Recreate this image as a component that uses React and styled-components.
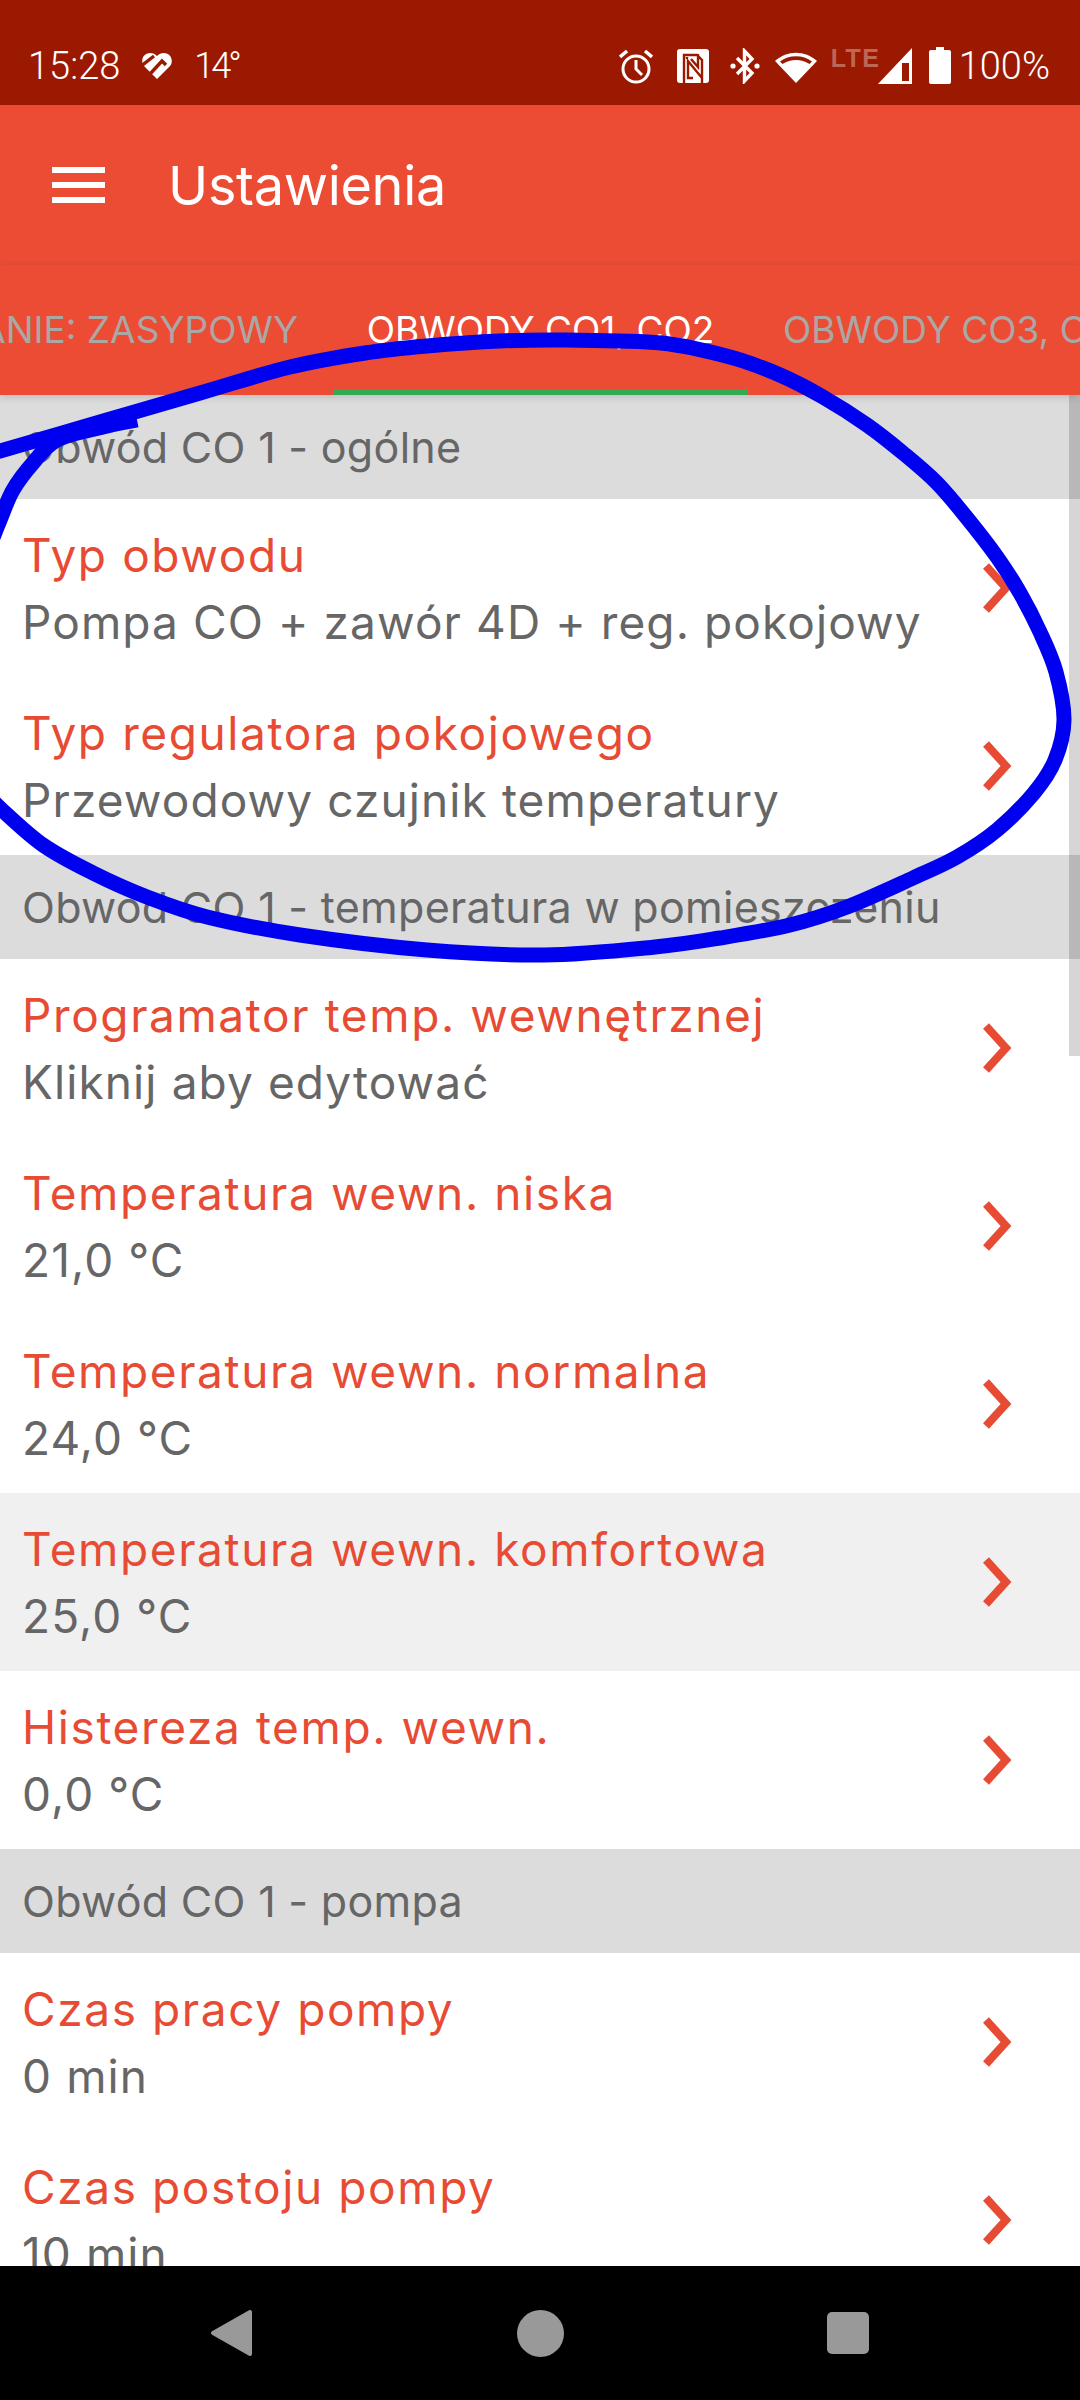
import React from 'react'
import styled, { createGlobalStyle } from 'styled-components'

const Global = createGlobalStyle`
  html, body { margin: 0; padding: 0; background: #fff; }
  * { box-sizing: border-box; }
`

const Screen = styled.div`
  position: relative;
  width: 1080px;
  height: 2400px;
  display: flex;
  flex-direction: column;
  overflow: hidden;
  font-family: Inter, "Liberation Sans", sans-serif;
  background: #fff;
`

const StatusBar = styled.div`
  height: 105px;
  flex: none;
  background: #9b1900;
  color: #fff;
  display: flex;
  align-items: center;
  justify-content: space-between;
  padding: 26px 30px 0 28px;
  font-family: Roboto, sans-serif;
  font-weight: 300;
`

const StatusGroup = styled.div`
  display: flex;
  align-items: center;
  gap: ${p => p.$gap || 0}px;
`

const Slot = styled.div`
  display: flex;
  margin-left: ${p => p.$left || 0}px;
`

const StatusText = styled.span`
  font-size: ${p => p.$size || 38}px;
  line-height: 40px;
  letter-spacing: ${p => p.$spacing || 0}px;
`

const AppBar = styled.div`
  height: 160px;
  flex: none;
  background: #ec4c34;
  color: #fff;
  display: flex;
  align-items: center;
  gap: 63px;
  padding: 0 0 0 52px;
`

const MenuIcon = styled.div`
  width: 53px;
  display: flex;
  flex-direction: column;
  gap: 9px;
  span {
    height: 6px;
    background: #fff;
  }
`

const Title = styled.div`
  font-size: 54px;
  font-weight: 400;
  letter-spacing: -0.3px;
`

const Tabs = styled.div`
  height: 130px;
  flex: none;
  background: #ec4c34;
  display: grid;
  grid-template-columns: 333px 415px 332px;
  overflow: hidden;
  position: relative;
  z-index: 1;
  box-shadow: 0 2px 8px rgba(0, 0, 0, 0.15);
`

const Tab = styled.div`
  display: flex;
  justify-content: ${p => p.$align};
  padding: 43px 35px 0;
  white-space: nowrap;
  overflow: hidden;
  font-size: 37px;
  line-height: 44px;
  color: ${p => (p.$active ? '#fff' : '#aaa7a5')};
  border-bottom: 6px solid ${p => (p.$active ? '#34a853' : 'transparent')};
`

const List = styled.div`
  flex: 1;
  min-height: 0;
  overflow: hidden;
`

const Section = styled.div`
  height: 104px;
  background: #dcdcdc;
  color: #666;
  display: flex;
  align-items: center;
  padding-left: 22px;
  font-size: 43px;
  letter-spacing: 0.3px;
`

const Row = styled.div`
  height: 178px;
  background: ${p => (p.$hover ? '#f0f0f0' : '#fff')};
  display: flex;
  align-items: center;
  justify-content: space-between;
  padding: 0 66px 0 22px;
`

const RowText = styled.div`
  display: flex;
  flex-direction: column;
  gap: 15px;
  white-space: nowrap;
`

const RowTitle = styled.div`
  color: #e84b34;
  font-size: 46px;
  line-height: 52px;
  letter-spacing: 1.6px;
`

const RowValue = styled.div`
  color: #666;
  font-size: 46px;
  line-height: 52px;
  letter-spacing: 1.1px;
`

const ScrollThumb = styled.div`
  position: absolute;
  top: 395px;
  right: 0;
  width: 11px;
  height: 661px;
  background: rgba(0, 0, 0, 0.16);
`

const Doodle = styled.svg`
  position: absolute;
  inset: 0;
  z-index: 2;
  pointer-events: none;
`

const NavBar = styled.div`
  position: absolute;
  left: 0;
  right: 0;
  bottom: 0;
  z-index: 3;
  height: 134px;
  background: #000;
  display: grid;
  grid-template-columns: repeat(3, 308px);
  justify-content: center;
  justify-items: center;
  align-items: center;
`

const NavCircle = styled.div`
  width: 47px;
  height: 47px;
  border-radius: 50%;
  background: #999;
`

const NavSquare = styled.div`
  width: 42px;
  height: 42px;
  border-radius: 5px;
  background: #999;
`

const LteText = styled.span`
  width: 40px;
  height: 36px;
  font-family: "Liberation Sans", sans-serif;
  font-weight: 700;
  font-size: 25px;
  line-height: 20px;
  letter-spacing: 1.5px;
  color: rgba(255, 255, 255, 0.35);
`

const Chevron = () => (
  <svg width="32" height="50" viewBox="0 0 32 50">
    <path d="M4 3 L24 25 L4 47" fill="none" stroke="#e84b34" strokeWidth="8" />
  </svg>
)

const AlarmIcon = () => (
  <svg width="34" height="36" viewBox="0 0 34 36" fill="none" stroke="#fff" strokeWidth="3">
    <circle cx="17" cy="21" r="13" />
    <path d="M17 12 V21 L23 27" />
    <path d="M1 9 L8 3 M33 9 L26 3" strokeWidth="3.5" />
  </svg>
)

const NfcIcon = () => (
  <svg width="32" height="34" viewBox="0 0 32 34">
    <rect x="0" y="0" width="32" height="34" rx="3" fill="#fff" />
    <path d="M7 34 V6 H20 L25 11 V34 M10 10 V8 M25 29 L11 12 V29 H16 M14 10 L21 18 V5" fill="none" stroke="#9b1900" strokeWidth="2.4" />
  </svg>
)

const BluetoothIcon = () => (
  <svg width="30" height="36" viewBox="0 0 30 36" fill="#fff">
    <path d="M7 10 L22 25 L14.5 33 V3 L22 11 L7 26" fill="none" stroke="#fff" strokeWidth="3.4" />
    <circle cx="3" cy="18" r="2.6" />
    <circle cx="27" cy="18" r="2.6" />
  </svg>
)

const WifiIcon = () => (
  <svg width="42" height="36" viewBox="0 0 42 36">
    <path d="M21 35 L0 13 C12 2 30 2 42 13 Z" fill="#fff" />
    <path d="M5 13.5 C14 6.5 28 6.5 37 13.5 L34.5 16 C26 10.5 16 10.5 7.5 16 Z" fill="#9b1900" />
  </svg>
)

const SignalIcon = () => (
  <svg width="34" height="36" viewBox="0 0 34 36">
    <path d="M34 0 V36 H0 Z" fill="#fff" />
    <path d="M24 15 H31 V33 H24 Z" fill="#9b1900" />
  </svg>
)

const BatteryIcon = () => (
  <svg width="22" height="37" viewBox="0 0 22 37">
    <path d="M7 0 H15 V3 H20 Q22 3 22 5 V35 Q22 37 20 37 H2 Q0 37 0 35 V5 Q0 3 2 3 H7 Z" fill="#fff" />
  </svg>
)

const HeartIcon = () => (
  <svg width="30" height="26" viewBox="0 0 30 26">
    <path d="M15 26 L2 13 C-2 8 1 0 8 0 C11 0 13 1 15 3 C17 1 19 0 22 0 C29 0 32 8 28 13 Z" fill="#fff" />
    <path d="M-2 14 L12 3 M8 21 L20 8 L24 12" fill="none" stroke="#9b1900" strokeWidth="3.4" />
  </svg>
)

const BackIcon = () => (
  <svg width="44" height="48" viewBox="0 0 44 48">
    <path d="M40 3 V45 L3 24 Z" fill="#999" stroke="#999" strokeWidth="4" strokeLinejoin="round" />
  </svg>
)

// hand drawn circle around the first group, traced from the screenshot
const strokeA = [
  [-12, 455], [0, 451], [100, 422], [200, 393], [290, 367], [365, 353], [427, 346], [500, 341],
  [565, 340], [661, 343], [730, 357], [780, 375], [823, 397], [867, 425], [903, 453], [937, 483],
  [967, 518], [997, 557], [1020, 593], [1040, 632], [1056, 672], [1064, 720], [1055, 760], [1034, 793],
  [997, 830], [957, 857], [913, 878], [847, 907], [790, 925], [720, 938], [655, 947], [544, 955], [427, 950], [300, 935],
  [207, 917], [147, 897], [93, 873], [43, 845], [0, 808], [-12, 795],
]
const strokeB = [[-8, 540], [0, 520], [13, 490], [33, 463], [57, 440], [103, 427], [137, 420]]

const smooth = pts => {
  let d = `M${pts[0][0]} ${pts[0][1]}`
  for (let i = 0; i < pts.length - 1; i++) {
    const p0 = pts[i - 1] || pts[i]
    const p1 = pts[i]
    const p2 = pts[i + 1]
    const p3 = pts[i + 2] || p2
    const c1x = p1[0] + (p2[0] - p0[0]) / 6
    const c1y = p1[1] + (p2[1] - p0[1]) / 6
    const c2x = p2[0] - (p3[0] - p1[0]) / 6
    const c2y = p2[1] - (p3[1] - p1[1]) / 6
    d += ` C${c1x} ${c1y} ${c2x} ${c2y} ${p2[0]} ${p2[1]}`
  }
  return d
}

const groups = [
  {
    name: 'Obwód CO 1 - ogólne',
    rows: [
      { title: 'Typ obwodu', value: 'Pompa CO + zawór 4D + reg. pokojowy' },
      { title: 'Typ regulatora pokojowego', value: 'Przewodowy czujnik temperatury' },
    ],
  },
  {
    name: 'Obwód CO 1 - temperatura w pomieszczeniu',
    rows: [
      { title: 'Programator temp. wewnętrznej', value: 'Kliknij aby edytować' },
      { title: 'Temperatura wewn. niska', value: '21,0 °C' },
      { title: 'Temperatura wewn. normalna', value: '24,0 °C' },
      { title: 'Temperatura wewn. komfortowa', value: '25,0 °C', hover: true },
      { title: 'Histereza temp. wewn.', value: '0,0 °C' },
    ],
  },
  {
    name: 'Obwód CO 1 - pompa',
    rows: [
      { title: 'Czas pracy pompy', value: '0 min' },
      { title: 'Czas postoju pompy', value: '10 min' },
    ],
  },
]

export default function App() {
  return (
    <Screen>
      <Global />
      <StatusBar>
        <StatusGroup $gap={22}>
          <StatusText $size={38}>15:28</StatusText>
          <HeartIcon />
          <StatusText $size={36} $spacing={-3}>14°</StatusText>
        </StatusGroup>
        <StatusGroup>
          <Slot><AlarmIcon /></Slot>
          <Slot $left={24}><NfcIcon /></Slot>
          <Slot $left={21}><BluetoothIcon /></Slot>
          <Slot $left={15}><WifiIcon /></Slot>
          <Slot $left={14}><LteText>LTE</LteText></Slot>
          <Slot $left={7}><SignalIcon /></Slot>
          <Slot $left={17}><BatteryIcon /></Slot>
          <Slot $left={8}><StatusText $size={38}>100%</StatusText></Slot>
        </StatusGroup>
      </StatusBar>

      <AppBar>
        <MenuIcon>
          <span />
          <span />
          <span />
        </MenuIcon>
        <Title>Ustawienia</Title>
      </AppBar>

      <Tabs>
        <Tab $align="flex-end">SPALANIE: ZASYPOWY</Tab>
        <Tab $align="center" $active>OBWODY CO1, CO2</Tab>
        <Tab $align="flex-start">OBWODY CO3, CO4</Tab>
      </Tabs>

      <List>
        {groups.map(g => (
          <React.Fragment key={g.name}>
            <Section>{g.name}</Section>
            {g.rows.map(r => (
              <Row key={r.title} $hover={r.hover}>
                <RowText>
                  <RowTitle>{r.title}</RowTitle>
                  <RowValue>{r.value}</RowValue>
                </RowText>
                <Chevron />
              </Row>
            ))}
          </React.Fragment>
        ))}
      </List>

      <ScrollThumb />

      <Doodle width="1080" height="2400" viewBox="0 0 1080 2400" fill="none" stroke="#0000f0" strokeWidth="15" strokeLinejoin="round">
        <path d={smooth(strokeA)} />
        <path d={smooth(strokeB)} />
      </Doodle>

      <NavBar>
        <BackIcon />
        <NavCircle />
        <NavSquare />
      </NavBar>
    </Screen>
  )
}
